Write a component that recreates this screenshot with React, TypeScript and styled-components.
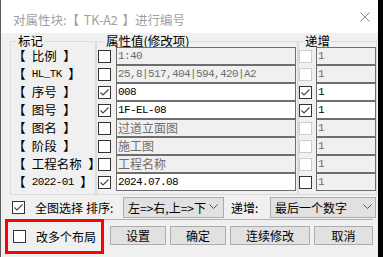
import * as React from 'react';
import styled, { createGlobalStyle } from 'styled-components';

const GlobalStyle = createGlobalStyle`
  html, body {
    margin: 0;
    padding: 0;
    background: #000;
  }
  body {
    font-family: "Noto Sans CJK SC", "Noto Sans", sans-serif;
    color: #000;
  }
`;

const Window = styled.div`
  width: 377px;
  height: 257px;
  border-left: 1px solid #5c5c5c;
  background: #f0f0f0;
  display: flex;
  flex-direction: column;
  overflow: hidden;
`;

const TitleBar = styled.div`
  height: 33px;
  flex-shrink: 0;
  box-sizing: border-box;
  background: #fff;
  display: flex;
  align-items: center;
  justify-content: space-between;
  padding: 0 8px 0 12px;
`;

const TitleText = styled.span`
  margin-top: 5px;
  font-size: 12.5px;
  color: #a0a0a0;
  white-space: pre;
  word-spacing: 2px;
`;

const Columns = styled.div`
  display: flex;
  padding: 2px 0 0 9px;
`;

const GroupBox = styled.fieldset<{ $w: number }>`
  width: ${(p) => p.$w}px;
  box-sizing: border-box;
  margin: 0;
  padding: 0 0 3px;
  min-width: 0;
  border: 1px solid #dcdcdc;
`;

const Legend = styled.legend<{ $ml: number }>`
  margin-left: ${(p) => p.$ml}px;
  padding: 0 1px;
  font-size: 12.5px;
  line-height: 12px;
`;

const Row = styled.div<{ $gap?: number; $pl?: number }>`
  height: 18px;
  display: flex;
  align-items: center;
  gap: ${(p) => p.$gap ?? 0}px;
  padding-left: ${(p) => p.$pl ?? 0}px;
`;

const Tag = styled.div`
  height: 18px;
  line-height: 14px;
  padding-left: 2px;
  display: flex;
  align-items: center;
  font-size: 12.5px;
  white-space: pre;
  word-spacing: 3.5px;
`;

const Mono = styled.span`
  font-family: "Liberation Mono", monospace;
  font-size: 11px;
  letter-spacing: -0.6px;
  word-spacing: 0;
`;

const Box = styled.span<{ $disabled?: boolean }>`
  width: 13px;
  height: 13px;
  flex-shrink: 0;
  box-sizing: border-box;
  border: 1px solid ${(p) => (p.$disabled ? '#cccccc' : '#333333')};
  background: #fff;
  display: flex;
`;

const Field = styled.div<{ $w: number; $disabled?: boolean }>`
  width: ${(p) => p.$w}px;
  height: 18px;
  flex-shrink: 0;
  box-sizing: border-box;
  border: 1px solid #6e6e6e;
  background: ${(p) => (p.$disabled ? '#f0f0f0' : '#fff')};
  color: ${(p) => (p.$disabled ? '#6d6d6d' : '#000')};
  padding-left: 1px;
  display: flex;
  align-items: center;
  overflow: hidden;
  white-space: pre;
  line-height: 14px;
`;

const Cjk = styled.span`
  font-size: 12px;
`;

const OptionRow = styled.div`
  height: 22px;
  margin-top: 1px;
  padding-left: 11px;
  display: grid;
  grid-template-columns: 13px 61px 37px 101px 46px 106px;
  align-items: center;
  font-size: 12px;
  white-space: pre;
`;

const OptText = styled.span<{ $pl: number }>`
  padding-left: ${(p) => p.$pl}px;
`;

const Combo = styled.div<{ $pr: number }>`
  height: 21px;
  box-sizing: border-box;
  border: 1px solid #adadad;
  background: #e1e1e1;
  display: flex;
  align-items: center;
  justify-content: space-between;
  padding: 0 ${(p) => p.$pr}px 0 4px;
`;

const BottomBar = styled.div`
  display: flex;
  margin-top: 1px;
`;

const Highlight = styled.div`
  margin-left: 4px;
  width: 99px;
  height: 35px;
  box-sizing: border-box;
  border: 3px solid #ff0000;
  display: flex;
  align-items: center;
  padding-left: 5px;
  font-size: 12px;
  gap: 10px;
`;

const ButtonArea = styled.div`
  width: 269px;
  height: 35px;
  box-sizing: border-box;
  border-top: 1px solid #f490a8;
  padding: 6px 0 0 6px;
  display: flex;
  gap: 4px;
`;

const Button = styled.div<{ $w: number }>`
  width: ${(p) => p.$w}px;
  height: 19px;
  box-sizing: border-box;
  border: 1px solid #adadad;
  background: #e1e1e1;
  display: flex;
  align-items: center;
  justify-content: center;
  font-size: 12px;
`;

function Check({ checked, disabled }: { checked?: boolean; disabled?: boolean }) {
  return (
    <Box $disabled={disabled}>
      {checked && (
        <svg width="11" height="11" viewBox="0 0 11 11">
          <polyline points="1.5,5.5 4,8 9.5,2.5" fill="none" stroke="#444" strokeWidth="1.1" />
        </svg>
      )}
    </Box>
  );
}

function Chevron() {
  return (
    <svg width="9" height="6" viewBox="0 0 9 6">
      <polyline points="0.5,0.5 4.5,4.5 8.5,0.5" fill="none" stroke="#555" strokeWidth="1" />
    </svg>
  );
}

type Item = {
  label: string;
  mono?: boolean;
  on: boolean;
  value: string;
  cjk?: boolean;
  incOn?: boolean;
};

const items: Item[] = [
  { label: '比例', on: false, value: '1:40' },
  { label: 'HL_TK', mono: true, on: false, value: '25,8|517,404|594,420|A2' },
  { label: '序号', on: true, value: '008', incOn: true },
  { label: '图号', on: true, value: '1F-EL-08', incOn: true },
  { label: '图名', on: false, value: '过道立面图', cjk: true },
  { label: '阶段', on: false, value: '施工图', cjk: true },
  { label: '工程名称', on: false, value: '工程名称', cjk: true },
  { label: '2022-01', mono: true, on: true, value: '2024.07.08', incOn: false },
];

export default function App() {
  return (
    <>
      <GlobalStyle />
      <Window>
        <TitleBar>
          <TitleText>对属性块:【 TK-A2 】进行编号</TitleText>
          <svg width="10" height="10" viewBox="0 0 10 10">
            <line x1="0.5" y1="0.5" x2="9.5" y2="9.5" stroke="#8a8a8a" strokeWidth="1" />
            <line x1="9.5" y1="0.5" x2="0.5" y2="9.5" stroke="#8a8a8a" strokeWidth="1" />
          </svg>
        </TitleBar>

        <Columns>
          <GroupBox $w={86}>
            <Legend $ml={6}>标记</Legend>
            {items.map((it) => (
              <Tag key={it.label}>
                {'【 '}
                {it.mono ? <Mono>{it.label}</Mono> : it.label}
                {' 】'}
              </Tag>
            ))}
          </GroupBox>

          <GroupBox $w={202}>
            <Legend $ml={8}>属性值(修改项)</Legend>
            {items.map((it) => (
              <Row key={it.label} $gap={5} $pl={1}>
                <Check checked={it.on} />
                <Field $w={180} $disabled={!it.on}>
                  {it.cjk ? <Cjk>{it.value}</Cjk> : <Mono>{it.value}</Mono>}
                </Field>
              </Row>
            ))}
          </GroupBox>

          <GroupBox $w={79}>
            <Legend $ml={5}>递增</Legend>
            {items.map((it) => (
              <Row key={it.label} $gap={4}>
                <Check checked={it.incOn} disabled={!it.on} />
                <Field $w={60} $disabled={!it.incOn}>
                  <Mono>1</Mono>
                </Field>
              </Row>
            ))}
          </GroupBox>
        </Columns>

        <OptionRow>
          <Check checked />
          <OptText $pl={10}>全图选择</OptText>
          <OptText $pl={0}>排序: </OptText>
          <Combo $pr={5}>
            <span>左=&gt;右,上=&gt;下</span>
            <Chevron />
          </Combo>
          <OptText $pl={7}>递增: </OptText>
          <Combo $pr={3}>
            <span>最后一个数字</span>
            <Chevron />
          </Combo>
        </OptionRow>

        <BottomBar>
          <Highlight>
            <Check />
            <span>改多个布局</span>
          </Highlight>
          <ButtonArea>
            <Button $w={56}>设置</Button>
            <Button $w={56}>确定</Button>
            <Button $w={80}>连续修改</Button>
            <Button $w={59}>取消</Button>
          </ButtonArea>
        </BottomBar>
      </Window>
    </>
  );
}
